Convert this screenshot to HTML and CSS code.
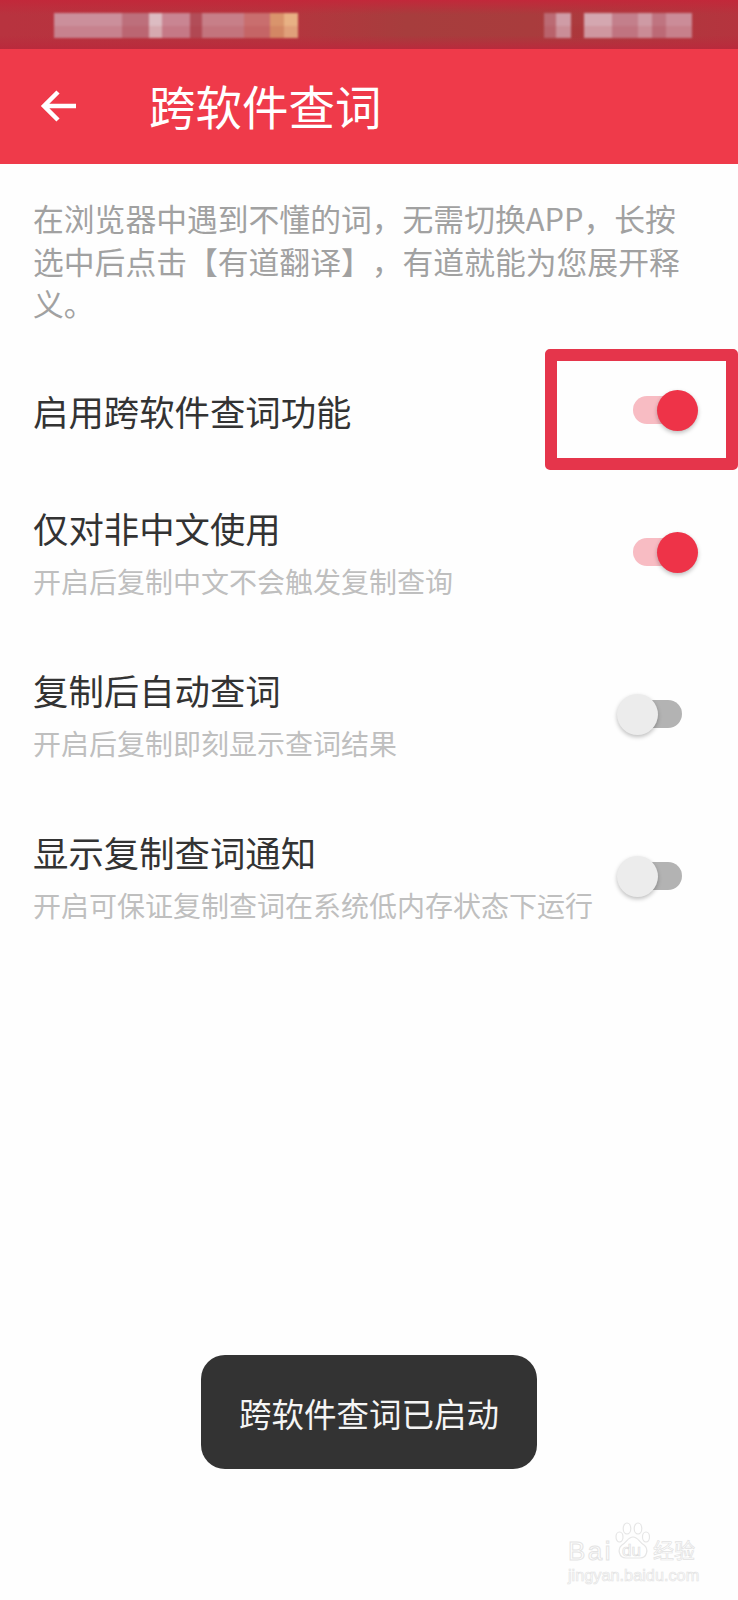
FILE: index.html
```html
<!DOCTYPE html>
<html lang="zh-CN">
<head>
  <meta charset="UTF-8" />
  <meta name="viewport" content="width=device-width, initial-scale=1.0"/>
  <title>跨软件查词</title>
  <link rel="stylesheet" href="styles.css">
</head>
<body>
  <div class="phone">
    <!-- status bar is pixelated in the original -->
    <div class="status">
      <div class="mosaic mosaic-left">
        <i class="l1"></i><i class="l2"></i><i class="l3"></i><i class="l4"></i><i class="l5"></i><i class="l6"></i><i class="l7"></i><i class="l8"></i><i class="l9"></i>
      </div>
      <div class="mosaic mosaic-right">
        <i class="r1"></i><i class="r2"></i><i class="r3"></i><i class="r4"></i><i class="r5"></i><i class="r6"></i><i class="r7"></i><i class="r8"></i>
      </div>
    </div>

    <header class="toolbar">
      <svg class="back" width="36" height="32" viewBox="0 0 36 32" fill="none" stroke="#fff" stroke-width="4.5">
        <path d="M36 16H4M18 2 4 16l14 14"/>
      </svg>
      <h1>跨软件查词</h1>
    </header>

    <main class="content">
      <p class="desc">在浏览器中遇到不懂的词，无需切换APP，长按选中后点击【有道翻译】，有道就能为您展开释义。</p>

      <div class="row row-first">
        <div class="row-text">
          <div class="row-title">启用跨软件查词功能</div>
        </div>
        <div class="switch on"><span class="track"></span><span class="thumb"></span></div>
      </div>

      <div class="row">
        <div class="row-text">
          <div class="row-title">仅对非中文使用</div>
          <div class="row-sub">开启后复制中文不会触发复制查询</div>
        </div>
        <div class="switch on"><span class="track"></span><span class="thumb"></span></div>
      </div>

      <div class="row">
        <div class="row-text">
          <div class="row-title">复制后自动查词</div>
          <div class="row-sub">开启后复制即刻显示查词结果</div>
        </div>
        <div class="switch"><span class="track"></span><span class="thumb"></span></div>
      </div>

      <div class="row">
        <div class="row-text">
          <div class="row-title">显示复制查词通知</div>
          <div class="row-sub">开启可保证复制查词在系统低内存状态下运行</div>
        </div>
        <div class="switch"><span class="track"></span><span class="thumb"></span></div>
      </div>
    </main>

    <!-- annotation drawn over the screenshot -->
    <div class="callout"></div>

    <div class="toast">跨软件查词已启动</div>

    <div class="watermark">
      <svg class="paw" width="36" height="37" viewBox="0 0 36 37" fill="#fff" stroke="#e6e6e6" stroke-width="1.2">
        <ellipse cx="4.5" cy="15" rx="3.5" ry="5"/>
        <ellipse cx="12" cy="6.5" rx="3.8" ry="5.5"/>
        <ellipse cx="23" cy="6.5" rx="3.8" ry="5.5"/>
        <ellipse cx="31" cy="15" rx="3.5" ry="5"/>
        <path d="M18 15c-5 0-6 5-11 8-5 4-3 13 4 13h14c7 0 9-9 4-13-5-3-6-8-11-8z"/>
      </svg>
      <div class="wm-du">du</div>
      <div class="wm-bai">Bai</div>
      <div class="wm-cn">经验</div>
      <div class="wm-url">jingyan.baidu.com</div>
    </div>
  </div>
</body>
</html>
```

FILE: styles.css
```css
* {
  box-sizing: border-box;
}

body {
  margin: 0;
  background: #fefefe;
  font-family: "Noto Sans CJK SC", "Noto Sans", sans-serif;
}

.phone {
  position: relative;
  width: 738px;
  height: 1600px;
  overflow: hidden;
  background: #fefefe;
}

.status {
  height: 49px;
  display: flex;
  justify-content: space-between;
  padding: 13px 46px 0 54px;
  background:
    linear-gradient(180deg, #c2283a 0%, rgba(190, 40, 58, 0) 30%, rgba(190, 40, 58, 0) 72%, #ba2a3c 100%),
    linear-gradient(90deg, #b8333f 0%, #b5353e 38%, #a73d3d 55%, #a93c3d 72%, #b5343e 100%);
}

.mosaic {
  display: flex;
  height: 25px;
  filter: blur(1px);
}

.mosaic i {
  display: block;
  height: 100%;
  box-shadow: inset 0 -12px rgba(170, 40, 50, 0.12);
}

.l1 { width: 68px; background: #cb8f9b; }
.l2 { width: 27px; background: #bd6f7b; }
.l3 { width: 13px; background: #dcbcc2; }
.l4 { width: 28px; background: #c98592; }
.l5 { width: 12px; background: #b24d58; }
.l6 { width: 42px; background: #c77f88; }
.l7 { width: 26px; background: #c96e6e; }
.l8 { width: 14px; background: #d9946c; }
.l9 { width: 14px; background: #e8b184; }

.r1 { width: 12px; background: #bb6a73; }
.r2 { width: 15px; background: #cf9ca6; }
.r3 { width: 13px; background: transparent; box-shadow: none; }
.r4 { width: 28px; background: #d4a7b0; }
.r5 { width: 26px; background: #c37f8b; }
.r6 { width: 14px; background: #ce9aa4; }
.r7 { width: 14px; background: #bf7480; }
.r8 { width: 26px; background: #cb8c98; }

.toolbar {
  height: 115px;
  display: flex;
  align-items: center;
  padding: 0 0 2px 40px;
  background: #ef3a4a;
}

.back {
  flex: none;
}

.toolbar h1 {
  margin: 0 0 0 73px;
  color: #fff;
  font-size: 46.5px;
  font-weight: 400;
  line-height: 1;
}

.content {
  padding: 33px 40px 0 33px;
}

.desc {
  margin: 0;
  width: 660px;
  color: #a1a1a1;
  font-size: 30.8px;
  line-height: 42.5px;
  text-spacing-trim: space-all;
}

.row {
  display: flex;
  justify-content: space-between;
  align-items: center;
  height: 162px;
}

.row-first {
  height: 122px;
  margin-top: 25px;
}

.row-title {
  color: #333;
  font-size: 35.4px;
  line-height: 44px;
}

.row-sub {
  margin-top: 12px;
  color: #bfbfbf;
  font-size: 28px;
  line-height: 38px;
}

.switch {
  position: relative;
  flex: none;
  width: 81px;
  height: 41px;
}

.track {
  position: absolute;
  top: 6px;
  left: 16px;
  width: 49px;
  height: 28px;
  border-radius: 14px;
  background: #b3b3b3;
}

.thumb {
  position: absolute;
  top: 0;
  left: 0;
  width: 41px;
  height: 41px;
  border-radius: 50%;
  background: #ececec;
  box-shadow: 0 2px 4px rgba(0, 0, 0, 0.25);
}

.switch.on .track {
  background: #f8bcc3;
}

.switch.on .thumb {
  left: 40px;
  background: #ee3348;
}

.callout {
  position: absolute;
  top: 349px;
  left: 545px;
  width: 193px;
  height: 121px;
  border: 12px solid #e5354b;
  border-radius: 5px;
}

.toast {
  position: absolute;
  top: 1355px;
  left: 201px;
  width: 336px;
  height: 114px;
  display: flex;
  align-items: center;
  justify-content: center;
  border-radius: 24px;
  background: #333;
  color: #f5f5f5;
  font-size: 32.5px;
}

.watermark {
  position: absolute;
  top: 1522px;
  left: 568px;
  width: 132px;
  height: 60px;
  color: #fff;
}

.paw {
  position: absolute;
  top: 0;
  left: 47px;
}

.wm-bai,
.wm-du,
.wm-url {
  position: absolute;
  font-family: "Liberation Sans", sans-serif;
}

.wm-bai {
  top: 14px;
  left: 0;
  font-size: 26px;
  line-height: 30px;
  letter-spacing: 2.5px;
  -webkit-text-stroke: 1px #e4e4e4;
}

.wm-du {
  top: 19px;
  left: 54px;
  font-size: 17px;
  line-height: 20px;
  -webkit-text-stroke: 0.7px #dedede;
}

.wm-cn {
  position: absolute;
  top: 14px;
  left: 85px;
  font-size: 21px;
  line-height: 26px;
  -webkit-text-stroke: 0.7px #e2e2e2;
}

.wm-url {
  top: 44px;
  left: 0;
  font-size: 16.3px;
  line-height: 18px;
  -webkit-text-stroke: 0.7px #e4e4e4;
}
```
